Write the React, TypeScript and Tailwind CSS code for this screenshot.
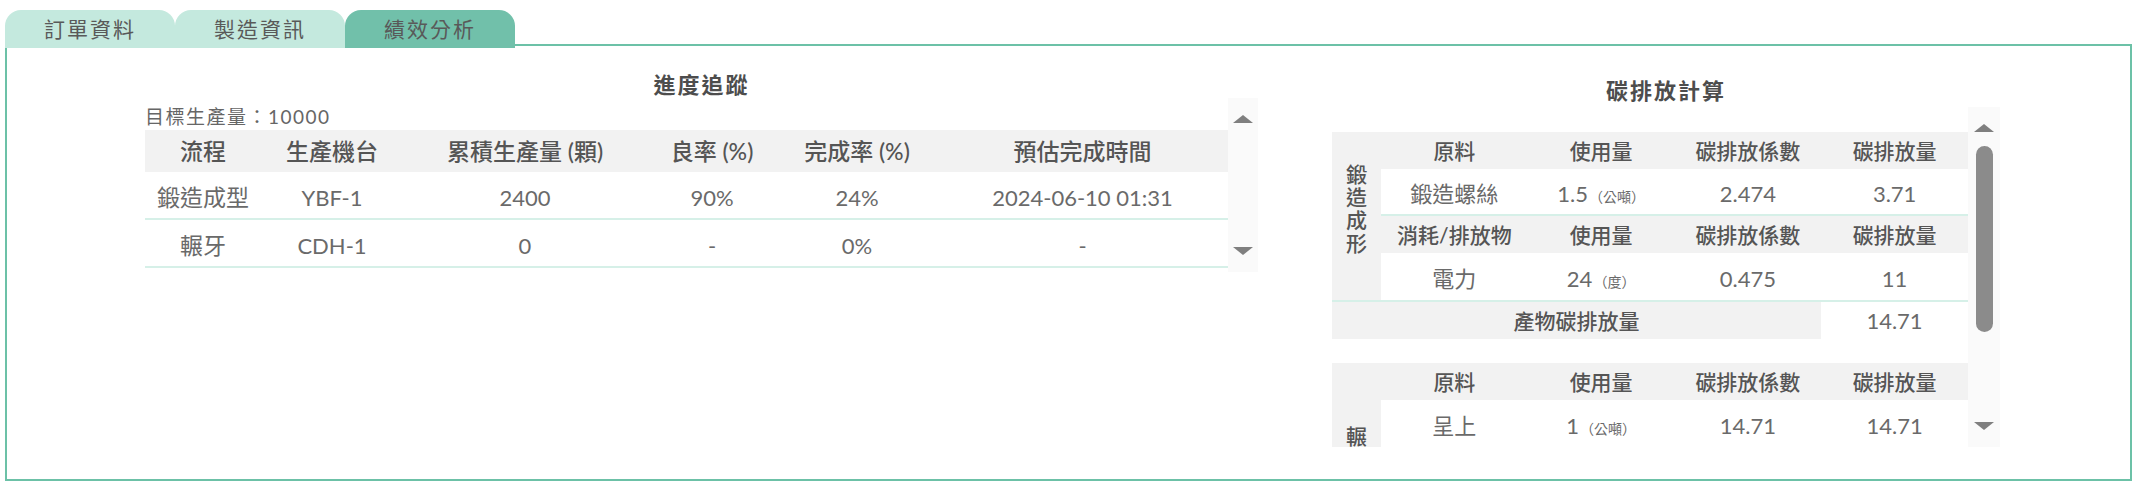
import React from 'react';

interface ProgressRow {
  flow: string;
  machine: string;
  qty: string;
  yieldRate: string;
  done: string;
  eta: string;
}

const progressRows: ProgressRow[] = [
  { flow: '鍛造成型', machine: 'YBF-1', qty: '2400', yieldRate: '90%', done: '24%', eta: '2024-06-10 01:31' },
  { flow: '輾牙', machine: 'CDH-1', qty: '0', yieldRate: '-', done: '0%', eta: '-' },
];

const tabs = ['訂單資料', '製造資訊', '績效分析'];

// 捲軸上下的小三角形
function Arrow({ down = false }: { down?: boolean }) {
  return (
    <svg width="20" height="8" viewBox="0 0 20 8" className="block shrink-0">
      <polygon points={down ? '0,0 20,0 10,8' : '0,8 10,0 20,8'} fill="#7f7f7f" />
    </svg>
  );
}

function Rail({ thumb = false, width }: { thumb?: boolean; width: string }) {
  return (
    <div className={`${width} h-full bg-[#fafafa] flex flex-col items-center pt-[17px] pb-[17px]`}>
      <Arrow />
      {thumb && <div className="mt-[14px] w-[17px] h-[186px] rounded-full bg-[#8b8b8b]" />}
      <div className="flex-1" />
      <Arrow down />
    </div>
  );
}

function Unit({ children }: { children: React.ReactNode }) {
  return <span className="text-[14px] ml-[1px]">（{children}）</span>;
}

function CarbonHeader({ first }: { first: string }) {
  return (
    <div className="grid grid-cols-4 h-[37px] items-center text-center bg-[#f2f2f2] text-[21px] font-medium text-[#555]">
      <span className="whitespace-nowrap">{first}</span>
      <span>使用量</span>
      <span>碳排放係數</span>
      <span>碳排放量</span>
    </div>
  );
}

function CarbonRow({ cells, line }: { cells: React.ReactNode[]; line?: boolean }) {
  return (
    <div
      className={`grid grid-cols-4 h-[47px] items-center text-center bg-white text-[22px] text-[#6a6a6a] ${
        line ? 'border-b-2 border-[#d6f0e8]' : ''
      }`}
    >
      {cells.map((c, i) => (
        <span key={i} className="pt-[4px] whitespace-nowrap">{c}</span>
      ))}
    </div>
  );
}

export default function App() {
  return (
    <div className="w-[2140px] h-[489px] bg-white font-['Lato','Noto_Sans_CJK_TC',sans-serif] overflow-hidden">
      {/* 頁籤 */}
      <div className="relative z-10 flex h-[38px] mt-[10px] pl-[5px]">
        {tabs.map((t, i) => (
          <div
            key={t}
            className={`w-[170px] h-full rounded-t-[16px] flex items-center justify-center text-[21px] tracking-[2px] text-[#595959] ${
              i === 2 ? 'bg-[#71c0aa]' : 'bg-[#c4e9de]'
            }`}
          >
            {t}
          </div>
        ))}
      </div>

      {/* 內容框 */}
      <div className="ml-[5px] mr-[8px] -mt-[4px] h-[437px] border-2 border-[#6cc1a7] flex items-start">
        {/* 進度追蹤 */}
        <div className="ml-[138px] mt-[27px] w-[1113px]">
          <h3 className="h-[24px] leading-[24px] text-center text-[22px] font-bold tracking-[2px] text-[#4d4d4d]">進度追蹤</h3>
          <div className="mt-[1px] h-[174px] flex">
            <div className="w-[1083px]">
              <div className="h-[32px] pt-[9px] text-[19px] leading-[19px] tracking-[1.5px] text-[#666]">目標生產量：10000</div>
              <div className="grid grid-cols-[116px_142px_244px_130px_160px_1fr] h-[42px] items-center text-center bg-[#f2f2f2] text-[23px] font-medium text-[#555]">
                <span>流程</span>
                <span>生產機台</span>
                <span>累積生產量 (顆)</span>
                <span>良率 (%)</span>
                <span>完成率 (%)</span>
                <span>預估完成時間</span>
              </div>
              {progressRows.map((r) => (
                <div
                  key={r.flow}
                  className="grid grid-cols-[116px_142px_244px_130px_160px_1fr] h-[48px] items-center text-center border-b-2 border-[#d6f0e8] text-[22px] text-[#6a6a6a]"
                >
                  <span className="pt-[4px] text-[23px]">{r.flow}</span>
                  <span className="pt-[4px]">{r.machine}</span>
                  <span className="pt-[4px]">{r.qty}</span>
                  <span className="pt-[4px]">{r.yieldRate}</span>
                  <span className="pt-[4px]">{r.done}</span>
                  <span className="pt-[4px]">{r.eta}</span>
                </div>
              ))}
            </div>
            <Rail width="w-[30px]" />
          </div>
        </div>

        {/* 碳排放計算 */}
        <div className="ml-[74px] mt-[33px] w-[668px]">
          <h3 className="h-[24px] leading-[24px] text-center text-[22px] font-bold tracking-[2px] text-[#4d4d4d]">碳排放計算</h3>
          <div className="mt-[4px] h-[340px] flex">
            <div className="w-[636px] h-full overflow-hidden pt-[25px]">
              <div className="flex">
                <div className="w-[49px] bg-[#f2f2f2] flex flex-col items-center justify-center pb-[16px] text-[21px] leading-[23px] font-medium text-[#555]">
                  <span>鍛</span>
                  <span>造</span>
                  <span>成</span>
                  <span>形</span>
                </div>
                <div className="flex-1">
                  <CarbonHeader first="原料" />
                  <CarbonRow line cells={['鍛造螺絲', <>1.5<Unit>公噸</Unit></>, '2.474', '3.71']} />
                  <CarbonHeader first="消耗/排放物" />
                  <CarbonRow cells={['電力', <>24<Unit>度</Unit></>, '0.475', '11']} />
                </div>
              </div>
              <div className="grid grid-cols-[1fr_147px] h-[39px] border-t-2 border-[#d6f0e8] text-center items-stretch">
                <div className="bg-[#f2f2f2] flex items-center justify-center text-[21px] font-medium text-[#555]">產物碳排放量</div>
                <div className="flex items-center justify-center text-[22px] text-[#6a6a6a]">14.71</div>
              </div>

              <div className="h-[24px]" />

              <div className="flex">
                <div className="w-[49px] bg-[#f2f2f2] flex flex-col items-center pt-[61px] text-[21px] leading-[23px] font-medium text-[#555]">
                  <span>輾</span>
                </div>
                <div className="flex-1">
                  <CarbonHeader first="原料" />
                  <CarbonRow cells={['呈上', <>1<Unit>公噸</Unit></>, '14.71', '14.71']} />
                </div>
              </div>
            </div>
            <Rail thumb width="w-[32px]" />
          </div>
        </div>
      </div>
    </div>
  );
}
